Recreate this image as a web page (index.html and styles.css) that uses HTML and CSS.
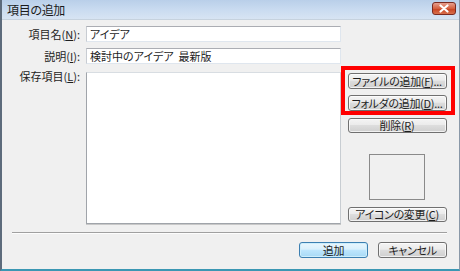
FILE: index.html
```html
<!DOCTYPE html>
<html lang="ja">
<head>
<meta charset="utf-8">
<link rel="stylesheet" href="styles.css">
</head>
<body>
<div class="window">
  <div class="titlebar">
    <span class="title">項目の追加</span>
    <span class="close">
      <svg width="12" height="9" viewBox="0 0 12 9"><path d="M2.5 1.5 L9.5 7.5 M9.5 1.5 L2.5 7.5" stroke="#fff" stroke-width="2.2" stroke-linecap="round"/></svg>
    </span>
  </div>
  <div class="content">
    <div class="form">
      <label class="lbl r1">項目名(<u>N</u>):</label>
      <div class="input r1">アイデア</div>
      <label class="lbl r2">説明(<u>I</u>):</label>
      <div class="input r2">検討中のアイデア&nbsp;&nbsp;最新版</div>
      <label class="lbl r3">保存項目(<u>L</u>):</label>
      <div class="list r3"></div>
      <div class="side r3">
        <div class="group">
          <button class="btn wide">ファイルの追加(<u>F</u>)...</button>
          <button class="btn wide">フォルダの追加(<u>D</u>)...</button>
          <div class="mark"></div>
        </div>
        <button class="btn wide del">削除(<u>R</u>)</button>
        <div class="iconbox"></div>
        <button class="btn wide">アイコンの変更(<u>C</u>)</button>
      </div>
    </div>
    <div class="sep"></div>
    <div class="footer">
      <button class="btn foot default">追加</button>
      <button class="btn foot">キャンセル</button>
    </div>
  </div>
</div>
</body>
</html>
```
FILE: styles.css
```css
* { box-sizing: border-box; }
html, body { margin: 0; padding: 0; background: #fff; }
body {
  font-family: "Noto Sans CJK JP", "Noto Sans", sans-serif;
  font-size: 11px;
  font-feature-settings: "palt";
  color: #1e1e1e;
}
.window {
  width: 460px;
  height: 271px;
  background: #f0f0f0;
  border-left: 2px solid #5d6b7c;
  border-right: 1px solid #8a98a8;
  border-bottom: 2px solid #3b97b3;
  display: flex;
  flex-direction: column;
}
.titlebar {
  height: 20px;
  flex: none;
  display: flex;
  align-items: center;
  padding-left: 5px;
  padding-right: 2px;
  background: linear-gradient(to bottom, #b9cfe9 0%, #c9dbf0 50%, #d7e4f3 100%);
  border-bottom: 1px solid #c6d2de;
}
.title {
  font-size: 12px;
  line-height: 14px;
  color: #1a1a1a;
  letter-spacing: -0.3px;
}
.close {
  margin-left: auto;
  width: 24px;
  height: 13px;
  margin-top: -2px;
  margin-right: 1px;
  border: 1px solid #7b2a20;
  border-radius: 3px;
  background: linear-gradient(to bottom, #e7a08f 0%, #d5603f 50%, #c7401f 51%, #d8704c 100%);
  display: flex;
  align-items: center;
  justify-content: center;
}
.content {
  flex: 1;
  padding-top: 6px;
  display: flex;
  flex-direction: column;
}
.form {
  display: grid;
  grid-template-columns: 78px 255px 99px;
  grid-template-rows: 16px 16px 152px;
  column-gap: 6px;
  row-gap: 6px;
}
.r1 { grid-row: 1; }
.r2 { grid-row: 2; }
.r3 { grid-row: 3; margin-top: 2px; }
.lbl {
  grid-column: 1;
  text-align: right;
  line-height: 16px;
  white-space: nowrap;
}
.lbl.r3 { margin-top: -2px; }
.input {
  grid-column: 2;
  background: #fff;
  border: 1px solid #dfe6ee;
  border-top-color: #abadb3;
  border-left-color: #c8ccd2;
  padding-left: 3px;
  line-height: 14px;
  white-space: nowrap;
}
.list {
  grid-column: 2;
  background: #fff;
  border: 1px solid #a0a4aa;
  border-top-color: #d8dde2;
  border-right-color: #c8cdd2;
  box-shadow: 0 1px 0 #c8c8c8;
  height: 152px;
}
.side {
  grid-column: 3;
  margin-left: 1px;
  display: flex;
  flex-direction: column;
  align-items: center;
  margin-top: 3px;
}
.group {
  position: relative;
  display: flex;
  flex-direction: column;
  gap: 6px;
  width: 99px;
}
.mark {
  position: absolute;
  left: -7px;
  top: -7px;
  width: 114px;
  height: 49px;
  border: 4px solid #ff0000;
}
.btn {
  font-family: inherit;
  font-size: 11px;
  font-feature-settings: "palt";
  letter-spacing: -0.3px;
  line-height: 13px;
  color: #1e1e1e;
  height: 16px;
  padding: 0;
  border: 1px solid #707070;
  border-radius: 3px;
  background: linear-gradient(to bottom, #f4f4f4 0%, #ebebeb 45%, #dddddd 50%, #cfcfcf 100%);
  box-shadow: inset 0 0 0 1px rgba(255,255,255,0.7);
  text-align: center;
  white-space: nowrap;
}
.wide { width: 99px; }
.del { margin-top: 7px; }
.iconbox {
  width: 56px;
  height: 47px;
  margin-top: 21px;
  border: 1px solid #8a8a8a;
  background: #f0f0f0;
}
.side > .btn:last-child { margin-top: 7px; }
.sep {
  margin: 10px 10px 0 10px;
  width: 435px;
  height: 2px;
  border-top: 1px solid #a0a0a0;
  border-bottom: 1px solid #fdfdfd;
}
.footer {
  display: flex;
  gap: 10px;
  margin-top: 8px;
  padding-left: 297px;
}
.foot { width: 69px; }
.default {
  border-color: #3c7fb1;
  background: linear-gradient(to bottom, #eaf6fd 0%, #d9f0fc 45%, #bee6fd 50%, #a7d9f5 100%);
  box-shadow: inset 0 0 0 1px #cdeefc;
}
u { text-decoration: underline; text-underline-offset: 1px; }
```
